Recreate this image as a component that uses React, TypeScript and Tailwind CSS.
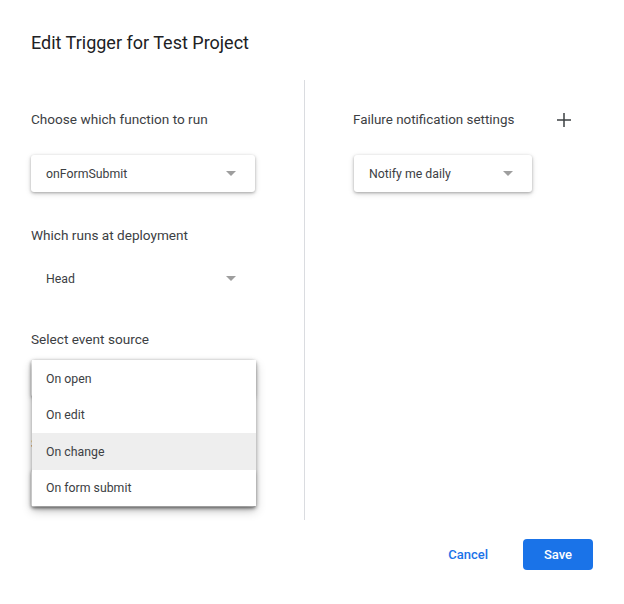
import React from 'react';

function Arrow() {
  return (
    <svg width="10" height="5" viewBox="0 0 10 5" className="shrink-0">
      <path d="M0 0 L10 0 L5 5 Z" fill="#9e9e9e" />
    </svg>
  );
}

function Select({ value, width, flat }: { value: string; width: string; flat?: boolean }) {
  return (
    <div
      className={`flex h-[37px] items-center justify-between rounded-[3px] bg-white pl-[15px] pr-[19px] ${width} ${
        flat ? '' : 'shadow-[0_1px_3px_rgba(0,0,0,0.3),0_2px_6px_rgba(0,0,0,0.12)]'
      }`}
    >
      <span className="pt-[2px] text-[12.3px] text-[#3c4043]">{value}</span>
      <Arrow />
    </div>
  );
}

export default function App() {
  const events = ['On open', 'On edit', 'On change', 'On form submit'];
  const active = 2;

  return (
    <div className="h-[604px] w-[624px] bg-white font-['Roboto',sans-serif] text-[#3c4043]">
      <h1 className="pl-[31px] pt-[31px] text-[18px] leading-6 text-[#202124]">Edit Trigger for Test Project</h1>

      <div className="mt-[25px] flex">
        {/* left column */}
        <div className="w-[304px] pl-[31px]">
          <div className="mt-[29px] text-[13.6px] leading-5">Choose which function to run</div>
          <div className="mt-[26px]">
            <Select value="onFormSubmit" width="w-[224px]" />
          </div>

          <div className="mt-[33px] text-[13.6px] leading-5">Which runs at deployment</div>
          <div className="mt-[15px]">
            <Select value="Head" width="w-[224px]" flat />
          </div>

          <div className="mt-[32px] text-[13.6px] leading-5">Select event source</div>
          <div className="relative mt-[11px]">
            <Select value="From form" width="w-[224px]" />

            <div className="mt-[36px] text-[13.6px] leading-5">Select event type</div>
            <div className="mt-[17px]">
              <Select value="On form submit" width="w-[224px]" />
            </div>

            {/* open menu */}
            <div className="absolute left-[1px] top-0 w-[224px] bg-white shadow-[0_2px_4px_rgba(0,0,0,0.35),0_5px_10px_rgba(0,0,0,0.2)]">
              {events.map((e, i) => (
                <div
                  key={e}
                  className={`flex h-[36.5px] items-center pl-[14px] pt-px text-[12.3px] text-[#3c4043] ${
                    i === active ? 'bg-[#eeeeee]' : ''
                  }`}
                >
                  {e}
                </div>
              ))}
            </div>
          </div>
        </div>

        {/* divider */}
        <div className="h-[440px] w-px bg-[#dadce0]" />

        {/* right column */}
        <div className="flex-1 pl-[48px]">
          <div className="mt-[30px] flex items-center">
            <span className="text-[13.4px] leading-5">Failure notification settings</span>
            <svg width="14" height="14" viewBox="0 0 14 14" className="ml-[43px]">
              <path d="M7 0 V14 M0 7 H14" stroke="#3c4043" strokeWidth="1.5" />
            </svg>
          </div>
          <div className="mt-[25px] pl-px">
            <Select value="Notify me daily" width="w-[178px]" />
          </div>
        </div>
      </div>

      <div className="mt-[19px] flex items-center justify-end pr-[31px]">
        <button className="mr-[35px] text-[13px] font-medium text-[#1a73e8]">Cancel</button>
        <button className="h-[31px] w-[70px] rounded-[4px] bg-[#1a73e8] text-[13px] font-medium text-white">Save</button>
      </div>
    </div>
  );
}
